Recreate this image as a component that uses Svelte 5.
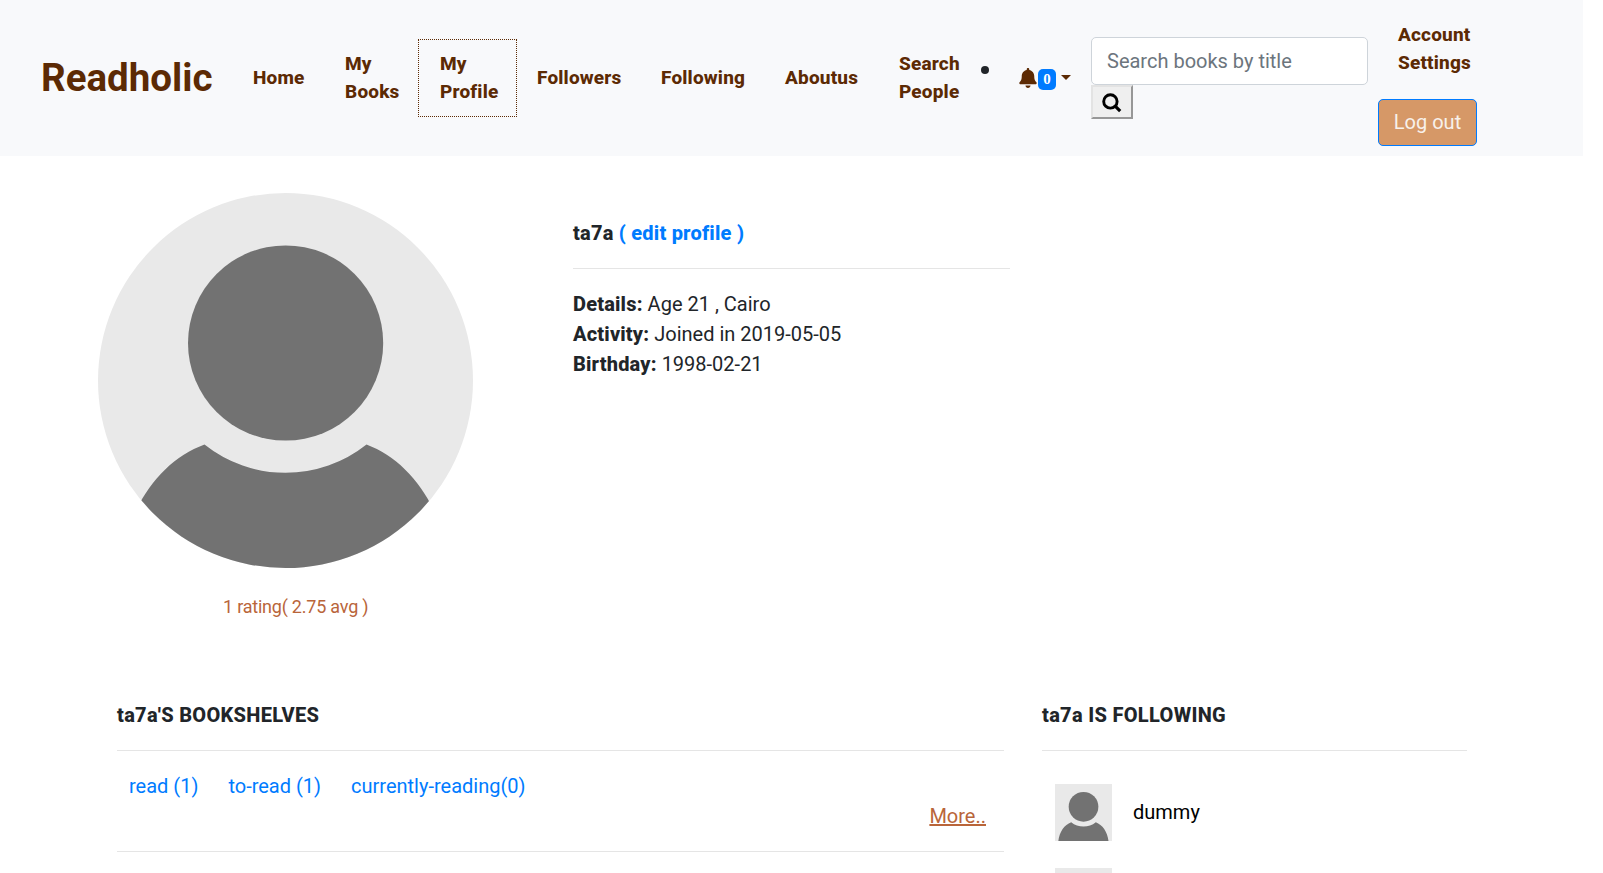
<script>
  const links = [
    { label: 'Home', width: 92 },
    { label: 'My Books', width: 93 },
    { label: 'My Profile', width: 99, focused: true },
    { label: 'Followers', width: 124 },
    { label: 'Following', width: 124 },
    { label: 'Aboutus', width: 114 },
    { label: 'Search People', width: 101 },
  ];
  const details = [
    ['Details:', 'Age 21 , Cairo'],
    ['Activity:', 'Joined in 2019-05-05'],
    ['Birthday:', '1998-02-21'],
  ];
</script>

{#snippet person()}
  <svg viewBox="0 0 375 375" aria-hidden="true">
    <rect width="375" height="375" fill="#e9e9e9" />
    <circle cx="187.6" cy="150" r="97.6" fill="#727272" />
    <path d="M22 375C29 314 62 268 106.5 251.5A130 130 0 0 0 268.5 251.5C312 268 345 314 352 375Z" fill="#727272" />
  </svg>
{/snippet}

<div class="page">
  <nav>
    <a class="brand" href="#home">Readholic</a>
    <ul class="links">
      {#each links as l}
        <li class:focused={l.focused} style:width="{l.width}px"><a href="#nav">{l.label}</a></li>
      {/each}
    </ul>
    <div class="notify">
      <span class="dot"></span>
      <svg class="bell" width="18" height="20" viewBox="0 0 448 512"><path fill="#5c2a04" d="M224 512c35.320 0 63.970-28.650 63.970-64H160.030c0 35.350 28.650 64 63.970 64zm215.390-149.710c-19.320-20.760-55.470-51.990-55.470-154.290 0-77.700-54.480-139.900-127.940-155.160V32c0-17.670-14.320-32-31.980-32s-31.980 14.330-31.980 32v20.840C118.560 68.100 64.080 130.300 64.080 208c0 102.300-36.150 133.530-55.470 154.290-6 6.450-8.660 14.160-8.610 21.710.11 16.400 12.980 32 32.100 32h383.800c19.120 0 32-15.600 32.100-32 .05-7.550-2.610-15.270-8.610-21.710z" /></svg>
      <span class="badge">0</span>
      <span class="caret"></span>
    </div>
    <form>
      <input placeholder="Search books by title" />
      <button type="button" aria-label="Search"><svg width="20" height="20" viewBox="0 0 20 20"><circle cx="8.4" cy="8.4" r="6.7" fill="none" stroke="#000" stroke-width="2.9" /><path d="M13.2 13.2L18.200 18.200" stroke="#000" stroke-width="3.200" /></svg></button>
    </form>
    <div class="account">
      <a href="#settings">Account<br />Settings</a>
      <button type="button">Log out</button>
    </div>
  </nav>

  <section class="profile">
    <div class="portrait">
      <div class="avatar">{@render person()}</div>
      <p>1 rating( 2.75 avg )</p>
    </div>
    <div class="info">
      <h1>ta7a <a href="#edit">( edit profile )</a></h1>
      <hr />
      {#each details as [k, v]}
        <div class="row"><b>{k}</b> {v}</div>
      {/each}
    </div>
  </section>

  <section class="lower">
    <div class="shelves">
      <h2>ta7a'S BOOKSHELVES</h2>
      <hr />
      <div class="shelf-links">
        <a href="#read">read (1)</a><a href="#toread">to-read (1)</a><a href="#current">currently-reading(0)</a>
      </div>
      <div class="more"><a href="#more">More..</a></div>
      <hr class="end" />
    </div>
    <div class="following">
      <h2>ta7a IS FOLLOWING</h2>
      <hr />
      <div class="friend"><div class="thumb">{@render person()}</div><span>dummy</span></div>
      <div class="friend"><div class="thumb">{@render person()}</div></div>
    </div>
  </section>
</div>

<style>
  :global(body) { margin: 0; overflow: hidden; }
  .page { width: 1603px; height: 873px; overflow: hidden; background: #fff; color: #212529; font: 20px/30px Roboto, sans-serif; }
  .page * { box-sizing: border-box; }
  a { color: #007bff; text-decoration: none; }
  svg { display: block; }
  h1, h2, p { margin: 0; }
  hr { margin: 0; border: 0; border-top: 1px solid #e5e5e5; }

  nav { display: flex; align-items: center; width: 1583px; height: 156px; background: #f8f9fb; }
  .brand { width: 192px; margin-left: 41px; color: #5c2a04; font-size: 38.500px; line-height: 60px; font-weight: 700; white-space: nowrap; }
  .links { display: flex; align-items: center; margin: 0; padding: 0; list-style: none; }
  .links li { display: flex; align-items: center; height: 78px; padding-left: 20px; }
  .links li:nth-child(n + 2) { padding-right: 18px; }
  .links li.focused { padding-left: 21px; border: 1px dotted #5c2a04; }
  .links a, .account a { color: #5c2a04; font-size: 19px; line-height: 28px; font-weight: 800; letter-spacing: 0.18px; }
  .notify { display: flex; align-items: center; width: 111px; height: 22px; margin-top: 2px; }
  .dot { width: 8px; height: 8px; margin: -18px 30px 0 1px; border-radius: 50%; background: #212529; }
  .bell { margin-top: -3px; }
  .badge { width: 18px; height: 21px; margin-left: 1px; border-radius: 5px; background: #007bff; color: #fff; text-align: center; font: 700 15px/21px "Liberation Serif", serif; }
  .caret { margin: -3px 0 0 5px; border: 5.500px solid transparent; border-top-color: #5c2a04; border-bottom: 0; }
  form { width: 277px; height: 82px; }
  input { display: block; width: 277px; height: 48px; padding: 0 15px; border: 1px solid #ced4da; border-radius: 5px; background: #fff; font: 20px Roboto, sans-serif; }
  input::placeholder { color: #6c757d; opacity: 1; }
  form button { display: flex; align-items: center; justify-content: center; width: 42px; height: 34px; padding: 1px 0 0; border: 2px solid; border-color: #e3e3e3 #979797 #979797 #e3e3e3; background: #efefef; }
  .account { height: 156px; margin-left: 10px; padding-top: 21px; }
  .account a { display: block; margin-left: 20px; }
  .account button { display: block; width: 99px; height: 47px; margin-top: 22px; padding: 0 0 2px; border: 1px solid #007bff; border-radius: 5px; background: #d69867; color: #f8f1eb; font: 20px Roboto, sans-serif; }

  .profile { display: flex; height: 543px; padding-left: 98px; }
  .portrait { width: 475px; padding-top: 37px; }
  .avatar { width: 375px; height: 375px; border-radius: 50%; overflow: hidden; }
  .portrait p { margin: 24px 0 0 125px; color: #b9653a; font-size: 18px; letter-spacing: -0.22px; }
  .info { width: 437px; padding-top: 62px; }
  h1, h2 { font-size: 20px; line-height: 30px; font-weight: 800; }
  b { font-weight: 800; letter-spacing: 0.18px; }
  h1 { margin-bottom: 20px; letter-spacing: 0.22px; }
  .info hr { margin-bottom: 20px; }
  .row { white-space: pre-wrap; }

  .lower { display: flex; padding-left: 117px; }
  .shelves { width: 887px; padding-top: 1px; }
  .following { width: 425px; margin-left: 38px; padding-top: 1px; }
  h2 { margin-bottom: 20px; letter-spacing: 0.31px; }
  .shelf-links { display: flex; gap: 30px; padding: 20px 0 0 12px; }
  .more { padding-right: 18px; text-align: right; }
  .more a { color: #b9653a; text-decoration: underline; }
  .end { margin-top: 20px; }
  .following hr { margin-bottom: 33px; }
  .friend { display: flex; align-items: center; gap: 21px; height: 57px; margin: 0 0 27px 13px; }
  .thumb { width: 57px; height: 57px; }
  .friend span { margin-top: -2px; color: #000; }
</style>
